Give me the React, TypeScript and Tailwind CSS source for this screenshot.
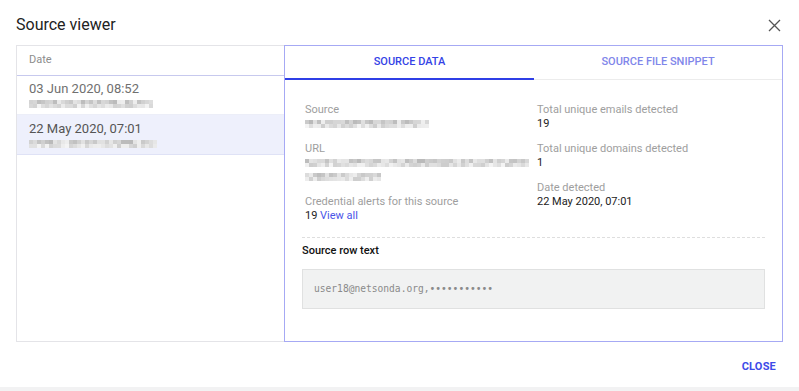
import React from 'react';

const font = { fontFamily: 'Roboto, "Noto Sans", Arial, sans-serif' };

interface MosaicProps {
  width: number;
  seed: number;
  className?: string;
}

// pixelated (redacted) value, drawn as a grid of grey cells
const Mosaic: React.FC<MosaicProps> = ({ width, seed, className = '' }) => {
  const cols = Math.floor(width / 4);
  let s = seed;
  const rnd = () => {
    s = (s * 9301 + 49297) % 233280;
    return s / 233280;
  };
  const rows = [0, 1].map((r) =>
    Array.from({ length: cols }, () => {
      const v = rnd();
      const shade = r === 0 ? 185 + Math.floor(v * 55) : 205 + Math.floor(v * 40);
      return `rgb(${shade},${shade},${shade})`;
    })
  );
  return (
    <div className={`h-[14px] flex flex-col justify-center ${className}`}>
      {rows.map((row, i) => (
        <div key={i} className="flex h-[4px]">
          {row.map((c, j) => (
            <span key={j} className="w-[4px] h-[4px]" style={{ backgroundColor: c }} />
          ))}
        </div>
      ))}
    </div>
  );
};

const Field: React.FC<{ label: string; children: React.ReactNode }> = ({ label, children }) => (
  <div className="mb-[11px]">
    <div className="text-[11px] leading-[14px] text-[#9e9e9e]">{label}</div>
    {children}
  </div>
);

const App: React.FC = () => {
  return (
    <div className="w-[799px] h-[391px] bg-white flex flex-col" style={font}>
      <div className="h-[45px] flex items-center justify-between pl-4 pr-[18px] pt-[5px]">
        <h1 className="text-[16px] text-[#222]">Source viewer</h1>
        <svg width="13" height="13" viewBox="0 0 13 13" className="text-[#555]">
          <path d="M1 1 L12 12 M12 1 L1 12" stroke="currentColor" strokeWidth="1.3" />
        </svg>
      </div>

      <div className="flex mx-4 h-[297px]">
        <div className="w-[268px] border-l border-t border-b border-[#e4e4e8] flex flex-col">
          <div className="h-[30px] border-b border-[#c7c9ee] flex items-center pl-3 text-[11px] text-[#8d8d8d]">
            Date
          </div>
          <div className="h-[39px] border-b border-[#eceef8] pl-3 pt-[5px]">
            <div className="text-[13px] leading-[16px] text-[#707070]">03 Jun 2020, 08:52</div>
            <Mosaic width={124} seed={7} />
          </div>
          <div className="h-[40px] bg-[#eef0fc] border-b border-[#dfe2f6] pl-3 pt-[6px]">
            <div className="text-[13px] leading-[16px] text-[#555]">22 May 2020, 07:01</div>
            <Mosaic width={128} seed={31} />
          </div>
        </div>

        <div className="flex-1 border border-[#a6a9f4] flex flex-col">
          <div className="h-[34px] flex border-b border-[#ececec]">
            <div className="w-[249px] flex items-center justify-center text-[11px] font-medium text-[#3443e6] border-b-2 border-[#2f3fe6] -mb-px">
              SOURCE DATA
            </div>
            <div className="flex-1 flex items-center justify-center text-[11px] font-medium text-[#7f86ea]">
              SOURCE FILE SNIPPET
            </div>
          </div>

          <div className="px-[17px] pt-[23px]">
            <div className="grid grid-cols-[232px_1fr] pl-[3px]">
              <div>
                <Field label="Source">
                  <Mosaic width={124} seed={53} />
                </Field>
                <Field label="URL">
                  <Mosaic width={224} seed={97} />
                  <Mosaic width={76} seed={11} />
                </Field>
                <Field label="Credential alerts for this source">
                  <div className="text-[11px] leading-[14px] text-[#222]">
                    19 <span className="text-[#4a55e8]">View all</span>
                  </div>
                </Field>
              </div>
              <div>
                <Field label="Total unique emails detected">
                  <div className="text-[11px] leading-[14px] text-[#222]">19</div>
                </Field>
                <Field label="Total unique domains detected">
                  <div className="text-[11px] leading-[14px] text-[#222]">1</div>
                </Field>
                <Field label="Date detected">
                  <div className="text-[11px] leading-[14px] text-[#222]">22 May 2020, 07:01</div>
                </Field>
              </div>
            </div>

            <div className="border-t border-dashed border-[#dedede] mt-[3px]" />
            <div className="text-[11px] font-medium text-[#111] mt-[6px] leading-[14px]">Source row text</div>
            <div className="mt-[11px] h-[40px] bg-[#f1f2f2] border border-[#e0e1e1] flex items-center pl-[11px]">
              <span className="text-[9.6px] text-[#8a8a8a]" style={{ fontFamily: '"DejaVu Sans Mono", "Liberation Mono", monospace' }}>
                user18@netsonda.org,•••••••••••
              </span>
            </div>
          </div>
        </div>
      </div>

      <div className="flex-1 flex justify-end items-start pr-[23px] pt-[17px]">
        <button className="text-[11px] font-bold text-[#3d4be8] tracking-[0.2px]">CLOSE</button>
      </div>
      <div className="h-[4px] bg-[#f2f2f3]" />
    </div>
  );
};

export default App;
